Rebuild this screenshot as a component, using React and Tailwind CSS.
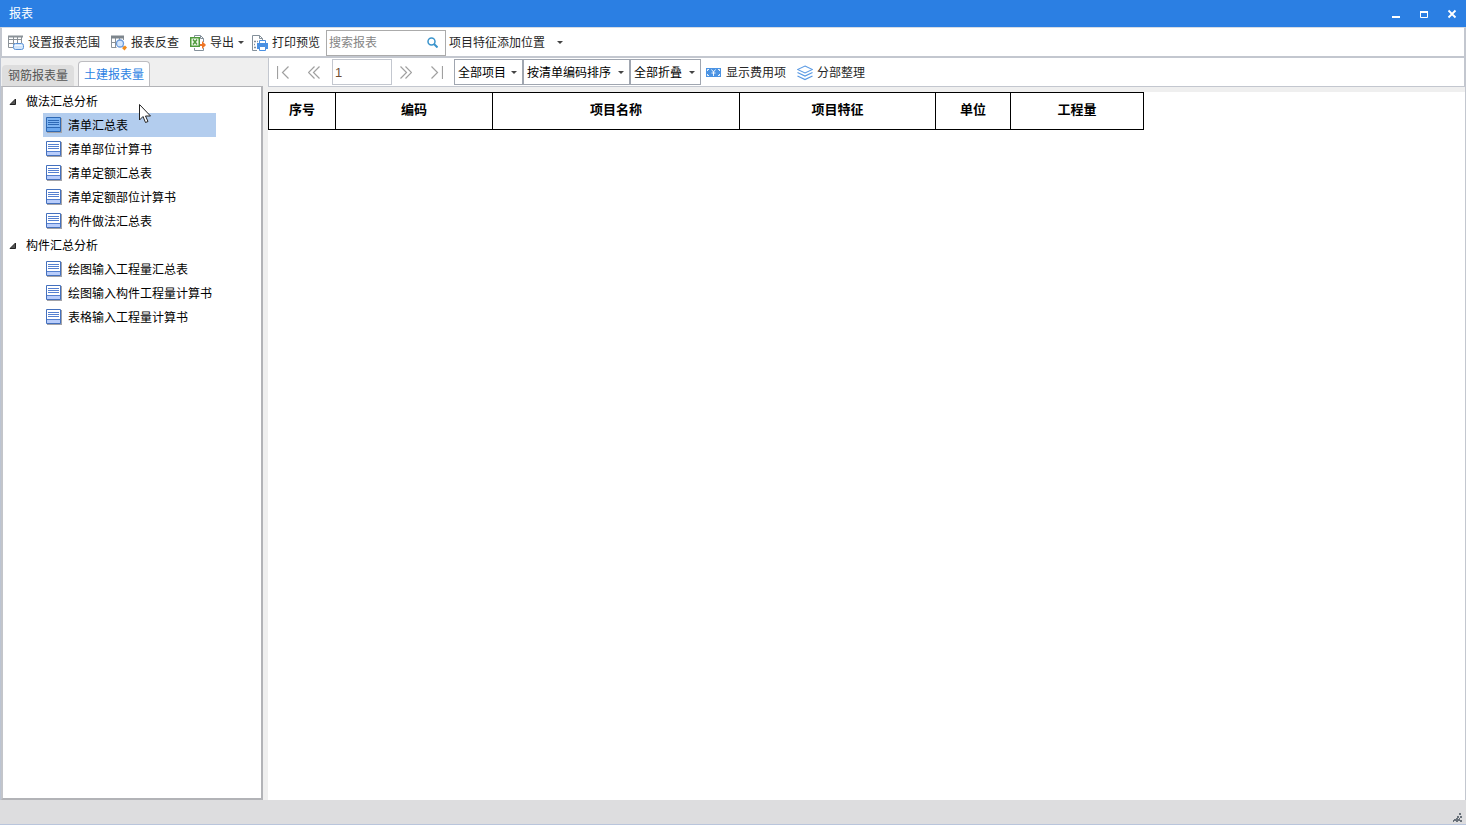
import React, { useState } from "react";

const TREE = [
    {
        title: "做法汇总分析",
        items: ["清单汇总表", "清单部位计算书", "清单定额汇总表", "清单定额部位计算书", "构件做法汇总表"],
    },
    {
        title: "构件汇总分析",
        items: ["绘图输入工程量汇总表", "绘图输入构件工程量计算书", "表格输入工程量计算书"],
    },
];

const COLUMNS = [
    { name: "序号", width: "w-[67px]" },
    { name: "编码", width: "w-[157px]" },
    { name: "项目名称", width: "w-[247px]" },
    { name: "项目特征", width: "w-[196px]" },
    { name: "单位", width: "w-[75px]" },
    { name: "工程量", width: "w-[133px]" },
];

const Svg = ({ children, w = 16, h = 16, className = "" }) => (
    <svg width={w} height={h} viewBox={`0 0 ${w} ${h}`} fill="none" className={`shrink-0 ${className}`} aria-hidden="true">
        {children}
    </svg>
);

const RangeIcon = () => (
    <Svg>
        <path d="M0.5 1v11.5h5M5.500 1v9M9.500 1v7M13.500 1v7M0 4.500h14M0 8.500h7" stroke="#8b9298" />
        <path d="M0 1.500h15" stroke="#8b9298" strokeWidth="2" />
        <rect x="5.500" y="8.500" width="10" height="6" rx="2" fill="#d3e6fb" stroke="#5a92d6" />
        <path d="M7 10.500h7" stroke="#f2f8ff" />
    </Svg>
);

const LookupIcon = () => (
    <Svg>
        <path d="M0.500 1v11.500h5M4.500 3v9M8.500 3v3M12.500 1v4M0 7.500h5" stroke="#8b9298" />
        <path d="M0 2h13" stroke="#7d858c" strokeWidth="3" />
        <circle cx="9" cy="8.500" r="3.500" fill="#d6e7fb" stroke="#6b9bdc" strokeWidth="1.300" />
        <path d="M11.500 11l1 1" stroke="#6b9bdc" strokeWidth="1.500" />
        <path d="M14 10.500l2 2-2.500 3-2.500-2.500z" fill="#f28c1c" />
    </Svg>
);

const ExportIcon = () => (
    <Svg>
        <path d="M4.500 2V0.500h6l3 3V7M4.500 13v2.500h9V13" stroke="#84909a" />
        <path d="M10.500 0.500v3h3" stroke="#84909a" />
        <rect x="0.750" y="2.750" width="8.500" height="8.500" fill="#f2faee" stroke="#4f9a3c" strokeWidth="1.500" />
        <path d="M3 4.500l4 5M7 4.500l-4 5" stroke="#4f9a3c" strokeWidth="1.500" />
        <path d="M10 9h2V6l4 4-4 4v-3h-2z" fill="#ee7526" />
    </Svg>
);

const PrintIcon = () => (
    <Svg>
        <path d="M5 15.500H0.500v-15h7l3 3V5M7.500 0.500v3h3" stroke="#84909a" />
        <path d="M2 6.500h2M2 9.500h1M2 12.500h2M5 6.500h1" stroke="#84909a" strokeWidth="1.500" />
        <path d="M7.500 9V5.500h6V9" fill="#fff" stroke="#4a90e2" />
        <path d="M5 8h11v6h-2v-2H7v2H5z" fill="#4a90e2" />
        <path d="M7.500 11.500h6v4h-6z" fill="#fff" stroke="#4a90e2" />
    </Svg>
);

const CostIcon = () => (
    <Svg w={15} h={9}>
        <path d="M0 0h15v9H0z" fill="#4b93e3" />
        <path d="M1.500 3V1.500H3M12 1.500h1.500V3M13.500 6v1.500H12M3 7.500H1.500V6M5.500 1.500l2 2.500 2-2.500M5.500 5h4M7.500 4v4" stroke="#fff" strokeWidth="0.900" />
    </Svg>
);

const LayersIcon = () => (
    <Svg>
        <path d="M8 1l7.500 3.500L8 8 0.500 4.500z" stroke="#5a9ae4" strokeWidth="1.100" />
        <path d="M0.500 7.500L8 11l7.500-3.500M0.500 11L8 14.500l7.500-3.500" stroke="#5a9ae4" strokeWidth="1.300" />
    </Svg>
);

const SheetIcon = ({ active }) => (
    <Svg>
        <path d="M1 1h15v15H1z" fill="#a3a3a8" />
        <path d="M0.500 0.500h14v14H0.500z" fill={active ? "#7db4f3" : "#fff"} stroke={active ? "#2e69b5" : "#4470bd"} />
        <path d="M1 11h13v3H1z" fill={active ? "#6aa7ee" : "#b9cdfb"} />
        <path d="M2 3.500h11M2 5.500h11M2 7.500h11M1 10.500h13" stroke={active ? "#2e69b5" : "#5580d0"} />
    </Svg>
);

const Caret = ({ className = "" }) => (
    <Svg w={6} h={3} className={className}>
        <path d="M0 0h6L3 3z" fill="#444" />
    </Svg>
);

const SearchIcon = () => (
    <Svg w={11} h={11}>
        <circle cx="4.500" cy="4.500" r="3.500" stroke="#3a94cc" strokeWidth="1.500" />
        <path d="M7 7l3.500 3.500" stroke="#3a94cc" strokeWidth="2" />
    </Svg>
);

const ToolButton = ({ icon, children }) => (
    <button className="flex items-center gap-1 h-6 whitespace-nowrap shrink-0">
        {icon}
        {children}
    </button>
);

const NavButton = ({ label, d }) => (
    <button aria-label={label} className="w-[26px] h-6 mr-[5px] flex items-center justify-center shrink-0">
        <Svg w={13} h={13}>
            <path d={d} stroke="#a0a0a0" strokeWidth="1.200" />
        </Svg>
    </button>
);

const Combo = ({ label, value, className }) => (
    <div className={`relative h-[26px] shrink-0 ${className}`}>
        <select aria-label={label} className="appearance-none w-full h-full bg-white border border-[#a0a6b0] pt-[2px] pl-[3px] pr-4 text-black outline-none">
            <option>{value}</option>
        </select>
        <Caret className="absolute right-[6px] top-[12px] pointer-events-none" />
    </div>
);

const App = () => {
    const [tab, setTab] = useState("土建报表量");
    const [selected, setSelected] = useState("清单汇总表");
    const [page, setPage] = useState("1");
    const [keyword, setKeyword] = useState("");

    return (
        <div className="min-h-screen flex flex-col bg-[#efefef] text-xs text-[#262626] border-b border-[#b9c5dc] font-['Liberation_Sans','Noto_Sans_CJK_SC',sans-serif]">
            <header className="h-[27px] bg-[#2b7fe3] text-white flex items-center justify-between pl-[9px] pr-2">
                <h1>报表</h1>
                <div className="flex gap-4">
                    <button aria-label="最小化" className="w-3 h-3"><Svg w={12} h={12}><path d="M2 9h8" stroke="#fff" strokeWidth="2" /></Svg></button>
                    <button aria-label="最大化" className="w-3 h-3"><Svg w={12} h={12}><path d="M2.500 3v6.500h7V3" stroke="#fff" /><path d="M2 4h8" stroke="#fff" strokeWidth="2" /></Svg></button>
                    <button aria-label="关闭" className="w-3 h-3"><Svg w={12} h={12}><path d="M2.500 2.500l7 7M9.500 2.500l-7 7" stroke="#fff" strokeWidth="1.800" /></Svg></button>
                </div>
            </header>

            <div className="h-[31px] bg-white border-t border-x-2 border-b-2 border-t-[#d5dbe4] border-x-[#c3c7cf] border-b-[#c3c7cf] flex items-center pl-[6px]">
                <div className="flex items-center gap-[11px] pt-px">
                    <ToolButton icon={<RangeIcon />}>设置报表范围</ToolButton>
                    <ToolButton icon={<LookupIcon />}>报表反查</ToolButton>
                    <ToolButton icon={<ExportIcon />}>导出<Caret /></ToolButton>
                </div>
                <div className="flex items-center ml-2 gap-[6px] pt-px">
                    <ToolButton icon={<PrintIcon />}>打印预览</ToolButton>
                    <label className="w-[120px] h-[26px] border border-[#ababab] flex items-center pl-[2px] pr-[7px]">
                        <input
                            aria-label="搜索报表"
                            placeholder="搜索报表"
                            value={keyword}
                            onChange={(e) => setKeyword(e.target.value)}
                            className="flex-1 min-w-0 outline-none placeholder:text-[#858585]"
                        />
                        <SearchIcon />
                    </label>
                </div>
                <button className="flex items-center gap-3 ml-[3px] pt-px whitespace-nowrap">
                    项目特征添加位置
                    <Caret />
                </button>
            </div>

            <div className="flex-1 flex gap-[5px]">
                <aside className="w-[263px] shrink-0 flex flex-col border-l border-[#bcc4d2]">
                    <div className="h-7 flex items-end gap-1 pl-px" role="tablist">
                        {["钢筋报表量", "土建报表量"].map((t) => (
                            <button
                                key={t}
                                role="tab"
                                aria-selected={tab === t}
                                onClick={() => setTab(t)}
                                className={`w-[72px] rounded-t-sm ${
                                    tab === t
                                        ? "h-[25px] pt-px bg-white text-[#2b7fe3] border border-b-0 border-[#bdbdc1]"
                                        : "h-[21px] bg-[#dedede] text-[#555]"
                                }`}
                            >
                                {t}
                            </button>
                        ))}
                    </div>

                    <nav className="flex-1 bg-white border-2 border-t border-[#b2b3b7] border-l-[#c3c5ca] pt-[2px] text-black relative">
                        {TREE.map((group) => (
                            <div key={group.title}>
                                <button className="h-6 flex items-center pl-[6px] gap-[10px]">
                                    <Svg w={7} h={7}>
                                        <path d="M6.500 1v5.500H1z" fill="#555" stroke="#222" />
                                    </Svg>
                                    <span className="pt-px">{group.title}</span>
                                </button>
                                <ul className="pl-10">
                                    {group.items.map((item) => (
                                        <li key={item}>
                                            <button
                                                onClick={() => setSelected(item)}
                                                className={`w-[173px] h-6 flex items-start gap-[6px] pl-[3px] pt-1 whitespace-nowrap ${
                                                    selected === item ? "bg-[#b3cdee]" : ""
                                                }`}
                                            >
                                                <SheetIcon active={selected === item} />
                                                <span className="pt-px">{item}</span>
                                            </button>
                                        </li>
                                    ))}
                                </ul>
                            </div>
                        ))}
                        {/* mouse pointer */}
                        <Svg w={13} h={20} className="absolute left-[136px] top-[17px] pointer-events-none">
                            <path d="M0.500 0.500v15.500l3.500-3.500 2.500 6 2.500-1-2.500-5.500h5z" fill="#fff" stroke="#222" />
                        </Svg>
                    </nav>
                </aside>

                <main className="flex-1 min-w-0 flex flex-col border-r border-[#c3c7cf]">
                    <div className="h-[29px] bg-white border-x border-b border-[#c3c7cf] flex items-center pl-px">
                        <NavButton label="第一页" d="M0.500 0v13M11.500 0.500l-6 6 6 6" />
                        <NavButton label="上一页" d="M6.500 0.500l-6 6 6 6M11.500 0.500l-6 6 6 6" />
                        <input
                            aria-label="页码"
                            value={page}
                            onChange={(e) => setPage(e.target.value)}
                            className="w-[60px] h-[26px] border border-[#c3c7cf] pl-[2px] text-[13px] text-[#704d35] outline-none"
                        />
                        <NavButton label="下一页" d="M1.500 0.500l6 6-6 6M6.500 0.500l6 6-6 6" />
                        <NavButton label="最后一页" d="M1.500 0.500l6 6-6 6M12.500 0v13" />
                        <Combo label="项目" value="全部项目" className="w-[69px]" />
                        <Combo label="排序" value="按清单编码排序" className="w-[107px]" />
                        <Combo label="折叠" value="全部折叠" className="w-[71px]" />
                        <div className="flex items-center gap-[11px] pl-[5px] pt-px">
                            <ToolButton icon={<CostIcon />}>
                                <span className="pl-px">显示费用项</span>
                            </ToolButton>
                            <ToolButton icon={<LayersIcon />}>分部整理</ToolButton>
                        </div>
                    </div>

                    <div className="flex-1 bg-white mt-[5px]">
                        <table className="w-[876px] table-fixed border-collapse text-[13px] text-black">
                            <thead>
                                <tr className="h-[37px]">
                                    {COLUMNS.map((c) => (
                                        <th key={c.name} scope="col" className={`${c.width} border border-black p-0 pb-[2px] font-bold`}>
                                            {c.name}
                                        </th>
                                    ))}
                                </tr>
                            </thead>
                        </table>
                    </div>
                </main>
            </div>

            <footer className="h-6 bg-[#dddddf] flex items-end justify-end pr-1 pb-[2px]">
                <Svg w={9} h={9}>
                    <path d="M6 0h2v2H6zM7 3h2v2H7zM4 3h2v2H4zM1 6h2v2H1zM3 5h2v2H3zM5 6h2v2H5zM7 7h2v2H7zM0 7h1v2H0zM3 7h2v2H3zM6 5h1v1H6z" fill="#69717a" />
                </Svg>
            </footer>
        </div>
    );
};

export default App;
